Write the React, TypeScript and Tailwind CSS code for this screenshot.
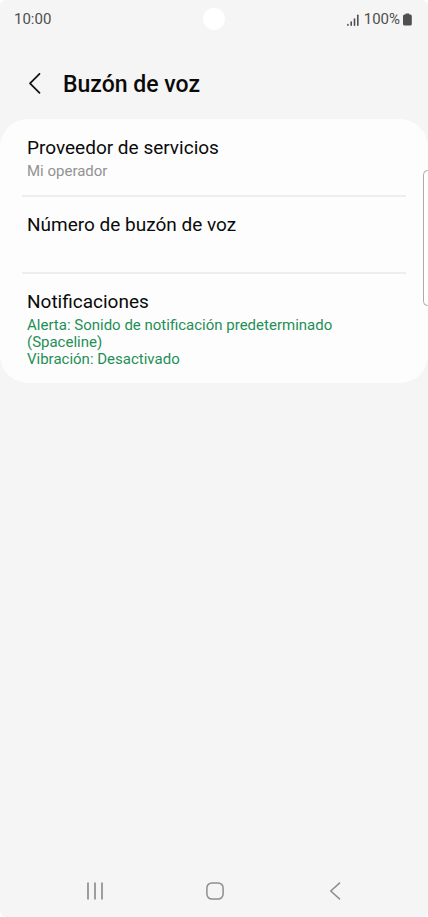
type Setting = {
  title: string
  lines: string[]
  accent?: boolean
}

const settings: Setting[] = [
  { title: 'Proveedor de servicios', lines: ['Mi operador'] },
  { title: 'Número de buzón de voz', lines: [] },
  {
    title: 'Notificaciones',
    lines: ['Alerta: Sonido de notificación predeterminado (Spaceline)', 'Vibración: Desactivado'],
    accent: true,
  },
]

function StatusBar() {
  return (
    <div className="grid grid-cols-3 items-center h-[38px] px-3.5 text-[#4f4f4f] text-[15px] leading-5">
      <span>10:00</span>
      <span className="justify-self-center size-[22px] rounded-full bg-white" />
      <div className="flex items-center justify-end">
        <svg width="13" height="13" viewBox="0 0 13 13" className="mr-1 mt-0.5" aria-hidden="true">
          <g stroke="currentColor" strokeWidth="1.6" strokeLinecap="round">
            <path d="M0.9 10.5V11.2" />
            <path d="M4.2 8V11.2" />
            <path d="M7.5 5V11.2" />
            <path d="M10.8 1.2V11.2" />
          </g>
        </svg>
        <span>100%</span>
        <svg width="12" height="13" viewBox="0 0 12 13" className="ml-0.5" aria-hidden="true">
          <path
            fill="currentColor"
            d="M3.4 0.9Q3.4 0.4 3.9 0.4H6.9Q7.4 0.4 7.4 0.9V1.6H8.4Q9.8 1.6 9.8 3.2V11Q9.8 12.6 8.2 12.6H2.6Q1 12.6 1 11V3.2Q1 1.6 2.4 1.6H3.4Z"
          />
        </svg>
      </div>
    </div>
  )
}

function SettingRow({ title, lines, accent }: Setting) {
  return (
    <li className="group">
      <button
        type="button"
        className="flex w-full min-h-[77px] flex-col items-start justify-start px-[27px] pt-[17px] text-left group-last:pb-[15px]"
      >
        <span className="text-[19px] leading-6 text-[#0a0a0a]">{title}</span>
        <span className={accent ? 'block max-w-[320px] pt-[3px] text-[#1f8f57]' : 'block pt-[3px] text-[#929292]'}>
          {lines.map(line => (
            <span key={line} className="block text-[15px] leading-[17px]">
              {line}
            </span>
          ))}
        </span>
      </button>
      <div className="mx-[22px] -my-px h-0.5 bg-[#eeeeee] group-last:hidden" />
    </li>
  )
}

function NavBar() {
  return (
    <nav className="grid grid-cols-3 h-[52px] pl-[35px] pr-[33px] text-[#8e8e8e]">
      <button type="button" aria-label="Recientes" className="flex items-center justify-center">
        <svg width="18" height="18" viewBox="0 0 18 18" stroke="currentColor" strokeWidth="1.7">
          <path d="M2 0.5V17.5M9 0.5V17.5M16 0.5V17.5" />
        </svg>
      </button>
      <button type="button" aria-label="Inicio" className="flex items-center justify-center">
        <svg width="18" height="18" viewBox="0 0 18 18" fill="none" stroke="currentColor" strokeWidth="1.5">
          <rect x="0.9" y="0.9" width="16.2" height="16.2" rx="5" />
        </svg>
      </button>
      <button type="button" aria-label="Atrás" className="flex items-center justify-center">
        <svg width="18" height="18" viewBox="0 0 18 18" fill="none" stroke="currentColor" strokeWidth="1.5">
          <path d="M14 0.6L4.8 9L14 17.4" />
        </svg>
      </button>
    </nav>
  )
}

export default function App() {
  return (
    <div className="bg-white">
      <div className="relative flex flex-col min-h-screen overflow-hidden rounded-[6px] bg-[#f5f5f5] font-['Roboto',sans-serif]">
        <StatusBar />

        <header className="flex items-center h-[81px] pt-2.5 pl-6">
          <button type="button" aria-label="Volver" className="mr-[17px] flex size-[22px] items-center justify-center">
            <svg width="22" height="22" viewBox="0 0 22 22" fill="none" stroke="#111" strokeWidth="1.7" strokeLinecap="round" strokeLinejoin="round">
              <path d="M15.5 0.8L6 10.3L15.5 19.8" />
            </svg>
          </button>
          <h1 className="pt-0.5 text-[23px] leading-7 font-medium text-[#0a0a0a]">Buzón de voz</h1>
        </header>

        <main className="flex-1">
          <ul className="rounded-[28px] bg-[#fdfdfd]">
            {settings.map(setting => (
              <SettingRow key={setting.title} {...setting} />
            ))}
          </ul>
        </main>

        <NavBar />

        {/* edge panel handle */}
        <div className="absolute top-[170px] -right-1 h-[136px] w-[9px] rounded-[5px] border border-[#aaa] bg-white" />
      </div>
    </div>
  )
}
